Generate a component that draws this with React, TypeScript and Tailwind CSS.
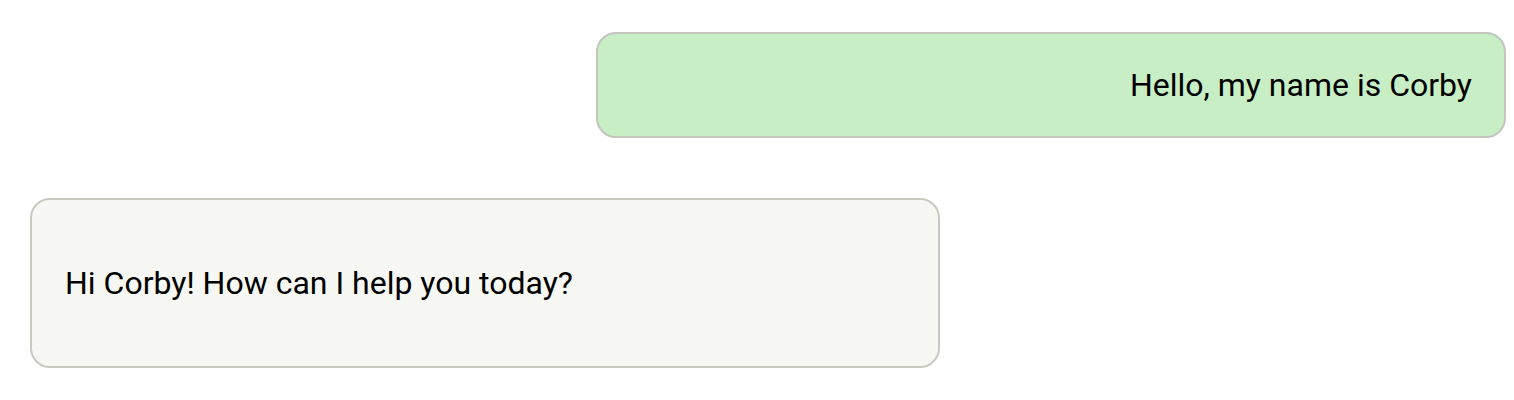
export default function App() {
  return (
    <div className="w-[1514px] h-[400px] bg-white flex flex-col pt-[32px]" style={{ fontFamily: 'Roboto, "Liberation Sans", sans-serif' }}>
      <div className="flex justify-end pr-[8px]">
        <div className="w-[910px] h-[106px] rounded-[20px] border-2 border-[#c2c6be] bg-[#c7eec4] flex items-center justify-end px-[32px] text-[32px] text-black">
          Hello, my name is Corby
        </div>
      </div>
      <div className="flex justify-start pl-[30px] mt-[60px]">
        <div className="w-[910px] h-[170px] rounded-[20px] border-2 border-[#c8cac2] bg-[#f7f8f4] flex items-center justify-start px-[33px] text-[32px] text-black">
          Hi Corby! How can I help you today?
        </div>
      </div>
    </div>
  );
}
